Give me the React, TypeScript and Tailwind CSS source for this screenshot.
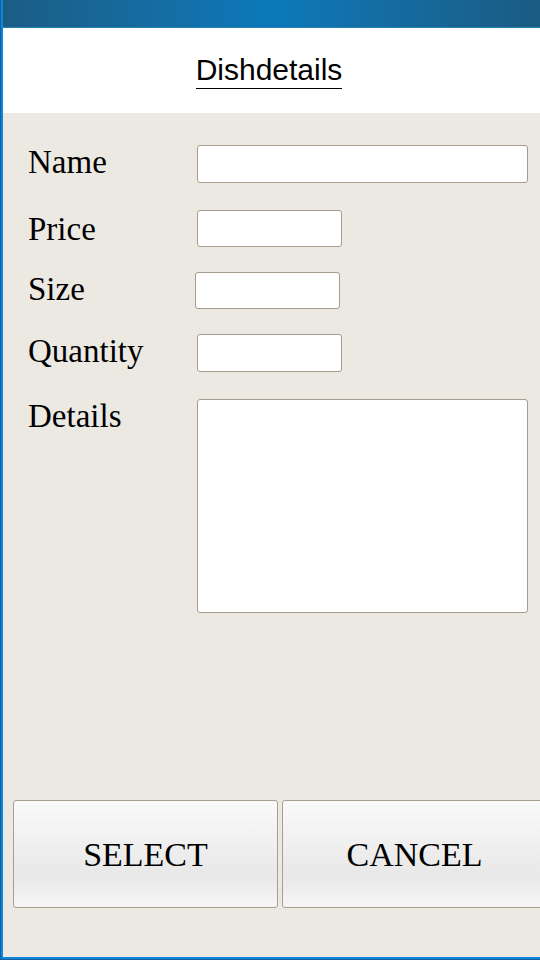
import React from 'react'

const serif = { fontFamily: '"Liberation Serif", "Times New Roman", serif' }

function Field({ label, top, width, height, shift = 0, lead = 34 }: { label: string; top: number; width: number; height: number; shift?: number; lead?: number }) {
  return (
    <div className="flex items-start" style={{ marginTop: top }}>
      <div className="w-[169px] h-[38px] text-[33px] text-black shrink-0" style={{ ...serif, lineHeight: `${lead}px` }}>
        {label}
      </div>
      <div
        className="bg-white border border-[#a59c8f] rounded-[3px] shrink-0"
        style={{ width, height, marginLeft: shift }}
      />
    </div>
  )
}

export default function App() {
  return (
    <div className="w-[540px] h-[960px] overflow-hidden border-l border-b border-[#155f9c]">
      <div className="h-full flex flex-col border-l-2 border-b-2 border-[#0b86dc]">
        {/* Title bar */}
        <div className="h-[28px] shrink-0 bg-linear-to-r from-[#1b5c85] via-[#0a79ba] to-[#1a5b82] border-b border-[#2a7fb3]" />

        {/* Header */}
        <div className="h-[85px] shrink-0 bg-white flex justify-center items-start pt-[27px] pr-[5px]">
          <span
            className="text-[30px] leading-[30px] pb-[3px] border-b border-black text-black"
            style={{ fontFamily: '"Liberation Sans", Arial, sans-serif' }}
          >
            Dishdetails
          </span>
        </div>

        {/* Form */}
        <div className="flex-1 bg-[#ece9e3] flex flex-col pl-[25px]">
          <Field label="Name" top={32} width={331} height={38} />
          <Field label="Price" top={27} width={145} height={37} lead={39} />
          <Field label="Size" top={24} width={145} height={37} shift={-2} />
          <Field label="Quantity" top={24} width={145} height={38} />
          <Field label="Details" top={27} width={331} height={214} />

          <div className="mt-auto mb-[49px] -ml-[15px] flex gap-[4px]">
            {['SELECT', 'CANCEL'].map((t) => (
              <button
                key={t}
                className="w-[265px] h-[108px] shrink-0 rounded-[3px] border border-[#a89f92] bg-linear-to-b from-[#fafafa] via-[#e8e8e8] via-70% to-[#f6f6f6] text-[34px] text-black flex items-center justify-center"
                style={serif}
              >
                {t}
              </button>
            ))}
          </div>
        </div>
      </div>
    </div>
  )
}
